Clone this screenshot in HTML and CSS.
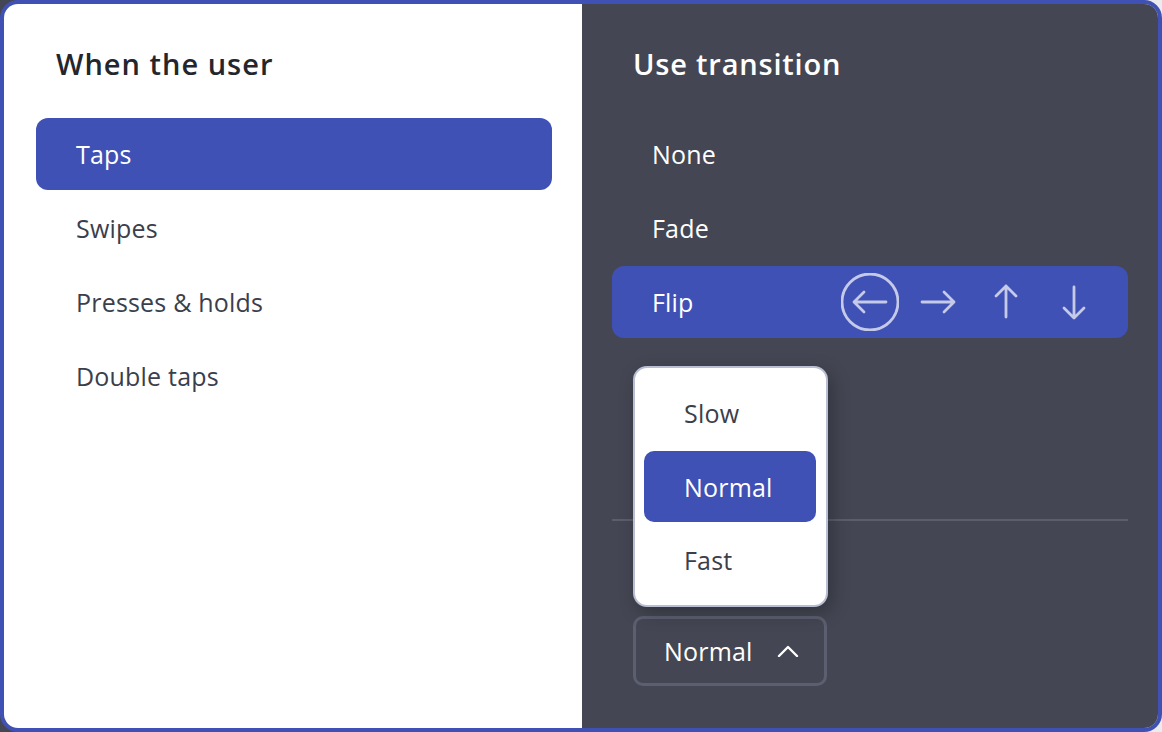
FILE: index.html
```html
<!DOCTYPE html>
<html lang="en">
<head>
<meta charset="utf-8">
<title>Transition settings</title>
<link rel="stylesheet" href="styles.css">
</head>
<body>
<div class="frame">
  <section class="panel left">
    <h2 class="heading">When the user</h2>
    <ul class="list">
      <li class="item active">Taps</li>
      <li class="item">Swipes</li>
      <li class="item">Presses &amp; holds</li>
      <li class="item">Double taps</li>
    </ul>
  </section>
  <section class="panel right">
    <h2 class="heading">Use transition</h2>
    <ul class="list">
      <li class="item">None</li>
      <li class="item">Fade</li>
      <li class="item active flip">
        <span>Flip</span>
        <span class="dirs">
          <span class="dir selected">
            <svg viewBox="0 0 58 58" width="58" height="58"><circle cx="29" cy="29" r="28" /><path d="M13 29H45M23 19L13 29L23 39" /></svg>
          </span>
          <span class="dir">
            <svg viewBox="0 0 58 58" width="58" height="58"><path d="M13 29H45M35 19L45 29L35 39" /></svg>
          </span>
          <span class="dir">
            <svg viewBox="0 0 58 58" width="58" height="58"><path d="M29 13V44M19 23L29 13L39 23" /></svg>
          </span>
          <span class="dir">
            <svg viewBox="0 0 58 58" width="58" height="58"><path d="M29 14V45M19 35L29 45L39 35" /></svg>
          </span>
        </span>
      </li>
    </ul>
    <div class="divider"></div>
    <div class="select-wrap">
      <ul class="menu">
        <li class="opt">Slow</li>
        <li class="opt active">Normal</li>
        <li class="opt">Fast</li>
      </ul>
      <button class="select">
        <span>Normal</span>
        <svg class="chev" viewBox="0 0 22 12" width="22" height="12"><path d="M2 11L11 2L20 11" /></svg>
      </button>
    </div>
  </section>
</div>
</body>
</html>
```

FILE: styles.css
```css
* { box-sizing: border-box; }
html, body { margin: 0; padding: 0; }
body {
  width: 1162px;
  height: 732px;
  background: linear-gradient(to right, #444753 50%, #ececef 50%);
  font-family: "Open Sans", "Noto Sans", sans-serif;
  overflow: hidden;
}
.frame {
  width: 1162px;
  height: 732px;
  border: 4px solid #3f51b5;
  border-radius: 18px;
  overflow: hidden;
  display: grid;
  grid-template-columns: 578px 1fr;
}
.panel { height: 100%; }
.left { background: #ffffff; padding: 44px 30px 0 32px; }
.right { background: #444753; padding: 44px 30px 0 30px; }

.heading {
  margin: 0 0 38px 0;
  font-size: 29px;
  line-height: 32px;
  font-weight: 600;
  letter-spacing: 1px;
}
.left .heading { color: #24262e; padding-left: 20px; }
.right .heading { color: #ffffff; padding-left: 21px; letter-spacing: 0.8px; }

.list {
  list-style: none;
  margin: 0;
  padding: 0;
  display: flex;
  flex-direction: column;
  gap: 2px;
}
.item {
  height: 72px;
  display: flex;
  align-items: center;
  padding-left: 40px;
  border-radius: 12px;
  font-size: 25px;
  letter-spacing: 0.2px;
}
.left .item { color: #3b3e4b; }
.right .item { color: #ffffff; }
.item.active { background: #3f51b5; color: #ffffff; }
.flip { justify-content: space-between; padding-right: 25px; }
.dirs { display: flex; gap: 10px; align-items: center; }
.dir { width: 58px; height: 58px; display: block; }
.dir svg { display: block; fill: none; stroke: #c5cae9; stroke-width: 2.8; stroke-linecap: round; stroke-linejoin: round; }

.divider {
  margin-top: 181px;
  height: 2px;
  background: #5b5e6c;
}
.select-wrap {
  position: relative;
  margin: 95px 0 0 21px;
  width: 194px;
}
.select {
  width: 194px;
  height: 70px;
  border: 3px solid #5b5f70;
  border-radius: 10px;
  background: transparent;
  color: #ffffff;
  font-family: inherit;
  font-size: 25px;
  letter-spacing: 0.2px;
  display: flex;
  align-items: center;
  justify-content: space-between;
  padding: 0 25px 0 28px;
}
.chev { display: block; fill: none; stroke: #ffffff; stroke-width: 2.4; stroke-linecap: round; stroke-linejoin: round; }
.menu {
  position: absolute;
  left: 0;
  bottom: 79px;
  width: 195px;
  margin: 0;
  padding: 9px 10px 9px 9px;
  list-style: none;
  background: #ffffff;
  border: 2px solid #b9bed3;
  border-radius: 14px;
  box-shadow: 4px 6px 18px rgba(0, 0, 0, 0.28);
  display: flex;
  flex-direction: column;
  gap: 2px;
}
.opt {
  height: 72px;
  display: flex;
  align-items: center;
  padding-left: 40px;
  border-radius: 10px;
  font-size: 25px;
  letter-spacing: 0.2px;
  color: #3b3e4b;
}
.opt.active { height: 71px; background: #3f51b5; color: #ffffff; }
```
